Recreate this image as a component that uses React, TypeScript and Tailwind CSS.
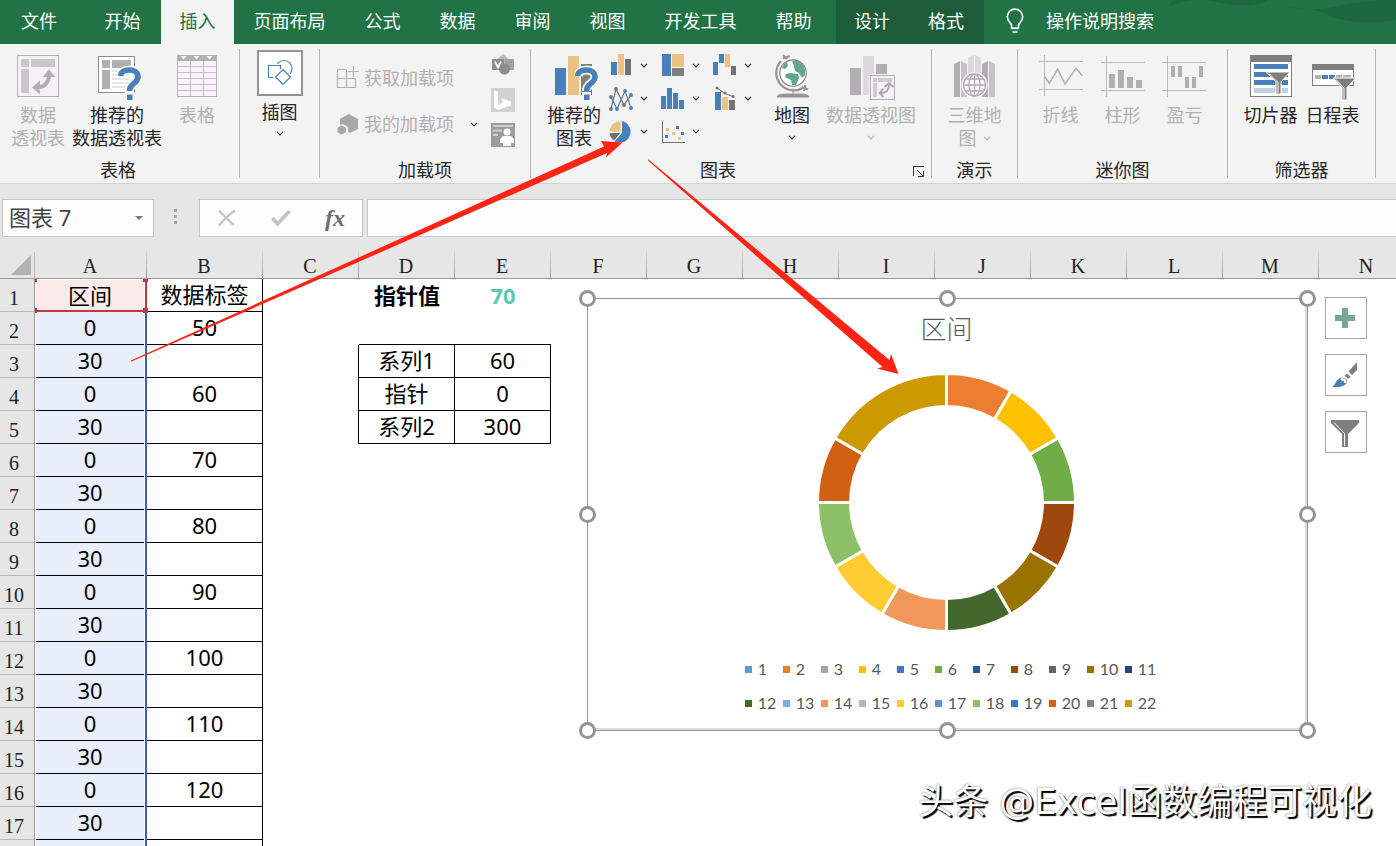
import React from 'react';
import clsx from 'clsx';

const Chevron = ({ className = 'text-[#262626]' }: { className?: string }) => (
  <svg viewBox="0 0 8 5" className={clsx('h-[5px] w-2 shrink-0', className)}>
    <path d="M1 0.8 4 3.8 7 0.8" fill="none" stroke="currentColor" strokeWidth="1.2" />
  </svg>
);

const BigIcon = ({ children }: { children: React.ReactNode }) => (
  <svg viewBox="0 0 48 48" className="h-12 w-12 shrink-0 overflow-visible">
    {children}
  </svg>
);

const SmallIcon = ({ children }: { children: React.ReactNode }) => (
  <svg viewBox="0 0 24 24" className="h-6 w-6 shrink-0 overflow-visible">
    {children}
  </svg>
);

const QuestionMark = () => (
  <g fill="none">
    <path d="M28.5 23C29 17.5 33 17 36.5 17C41 17 45 19 45 24C45 31 36.5 29.5 36.5 38" stroke="#f3f3f3" strokeWidth="9" />
    <rect x="32" y="39" width="9" height="9" fill="#f3f3f3" />
    <path d="M27.5 23C28 17.5 33 17 36.5 17C41 17 45 19 45 24C45 31 36.5 29.5 36.5 38" stroke="#4a80ba" strokeWidth="5.5" />
    <rect x="34" y="41.5" width="5.5" height="5.5" fill="#4a80ba" />
  </g>
);

const PivotIcon = () => (
  <BigIcon>
    <rect x="3.5" y="2.5" width="41" height="41" fill="#f5f1f6" stroke="#b4b2b4" />
    <path d="M7 6h8v8H7zM17 6h24v8H17zM7 16h8v24H7z" fill="#cac7ca" />
    <path d="M22 34c8 1 13-4 13-13" fill="none" stroke="#b1afb1" strokeWidth="4" />
    <path d="M35 16.500 41.500 24h-4l-2.500-2.500-2.500 2.500h-4zM18 34.500 26 27.500v4l-3 3 3 3v4z" fill="#b1afb1" />
  </BigIcon>
);

const RecommendedPivotIcon = () => (
  <BigIcon>
    <rect x="5.500" y="3.500" width="36" height="36" fill="#fff" stroke="#8c8c8c" />
    <path d="M9 7h8v8H9zM19 7h19v8H19zM9 17h8v19H9z" fill="#b1b1b1" />
    <path d="M19 18h17M19 22h17M19 26h17M19 30h17M19 34h14" stroke="#cfcfcf" />
    <QuestionMark />
  </BigIcon>
);

const TableIcon = () => (
  <BigIcon>
    <rect x="4.500" y="2.500" width="39" height="41" fill="#f7f3f8" stroke="#b1b1b1" />
    <path d="M4 2h40v6H4z" fill="#b1b1b1" />
    <path d="M7.500 3h6l-3 3.500zM20.500 3h6l-3 3.500zM33.500 3h6l-3 3.500z" fill="#fff" />
    <path d="M17.500 8v35M30.500 8v35M5 13.500h38M5 19.500h38M5 25.500h38M5 31.500h38M5 37.500h38" stroke="#c4c2c4" />
  </BigIcon>
);

const ShapesIcon = () => (
  <svg viewBox="0 0 46 46" className="h-[46px] w-[46px] shrink-0">
    <rect x="1" y="1" width="44" height="44" fill="#fff" stroke="#949494" strokeWidth="2" />
    <g fill="#fff" stroke="#4a80ba" strokeWidth="1.200">
      <circle cx="27" cy="18.500" r="8" />
      <path d="M11.500 15.500h12v12h-12z" stroke="#fff" strokeWidth="3" />
      <path d="M11.500 15.500h12v12h-12z" />
      <path d="M26 19.500 33.500 27 26 34.500 18.500 27z" stroke="#fff" strokeWidth="4" />
      <path d="M26 19.500 33.500 27 26 34.500 18.500 27z" />
    </g>
  </svg>
);

const RecommendedChartIcon = () => (
  <BigIcon>
    <path d="M5 15h11v27H5z" fill="#4a80ba" />
    <path d="M18 3h11v39H18z" fill="#eac282" />
    <path d="M31 11h11v31H31z" fill="#7f7f7f" />
    <QuestionMark />
  </BigIcon>
);

const GlobeIcon = () => (
  <BigIcon>
    <path d="M15 5.500 22 3M13 8A17.500 17.500 0 0 0 35.500 34.500M34 34l6 2.500M36 38l1.500-6" fill="none" stroke="#969696" strokeWidth="2.200" />
    <path d="m15 2 4 4" stroke="#969696" strokeWidth="2" />
    <circle cx="25" cy="20" r="13.200" fill="#fff" stroke="#858585" strokeWidth="1.200" />
    <path d="M14 15c1-3 3-5 5-6l1 4-3 3zM24 8c7-2 12 3 13 9v5l-3 3-3-5-4-2-1-5zM18 21l4-1 8 1 1 4-3 7h-4l-1-5-6-3z" fill="#62a58d" />
    <path d="M25 35.500v6M9 44c1-3 5-3 16-3s15 0 16 3z" fill="#969696" stroke="#969696" />
  </BigIcon>
);

const PivotChartIcon = () => (
  <BigIcon>
    <path d="M3 15h11v27H3zM29 11h11v15H29z" fill="#b1afb1" />
    <path d="M16 3h11v39H16z" fill="#dcd8dc" />
    <rect x="22" y="21" width="27" height="27" fill="#f3f3f3" />
    <rect x="23.500" y="22.500" width="24" height="24" fill="#f5f1f6" stroke="#b1afb1" />
    <path d="M26 25h4v4h-4zM31 25h14v4H31zM26 30h4v14h-4z" fill="#cfcccf" />
    <path d="M33 40c6 0 9-2 9-8" fill="none" stroke="#a9a7a9" strokeWidth="2" />
    <path d="m37.500 34 4.500-4 4.500 4M36.500 35.500 32.500 40l4 4" fill="none" stroke="#a9a7a9" strokeWidth="1.800" />
  </BigIcon>
);

const Map3DIcon = () => (
  <BigIcon>
    <path d="M3 11l6-3v36H3zM31 11l6-3v36h-6z" fill="#b1afb1" />
    <path d="M10 8l6 3v33h-6zM38 8l6 3v33h-6z" fill="#c6c3c6" />
    <path d="M17 5l6-3v36h-6zM24 2l6 3v36h-6z" fill="#dcd8dc" />
    <circle cx="23.500" cy="32" r="13" fill="#f3f3f3" />
    <g fill="none" stroke="#b1afb1" strokeWidth="1.300">
      <circle cx="23.500" cy="32" r="11" fill="#f7f3f8" />
      <ellipse cx="23.500" cy="32" rx="5.500" ry="11" />
      <path d="M23.500 21v22M12.500 32h22M14.500 26h18M14.500 38h18" />
    </g>
  </BigIcon>
);

const SparkLineIcon = () => (
  <BigIcon>
    <path d="M2 8.500h44M2 36.500h44M7.500 2v41" stroke="#b9b9b9" />
    <path d="m7.500 23.500 4.800 6.800 8.400-14L28 31l11-15.700 6.300 7.700" fill="none" stroke="#b1b1b1" strokeWidth="1.500" />
  </BigIcon>
);

const SparkColumnIcon = () => (
  <BigIcon>
    <path d="M2 9.500h44M2 37.500h44M7.500 3v41" stroke="#b9b9b9" />
    <path d="M10 21h6v14h-6zM19 17h6v18h-6zM28 24h6v11h-6zM37 27h6v8h-6z" fill="#b1afb1" />
  </BigIcon>
);

const WinLossIcon = () => (
  <BigIcon>
    <path d="M1 9.500h44M1 37.500h44M6.500 3v41" stroke="#b9b9b9" />
    <path d="M10 13h4v11h-4zM17 13h4v11h-4zM24 24h4v11h-4zM31 24h4v11h-4zM38 13h4v11h-4z" fill="#b1afb1" />
  </BigIcon>
);

const SlicerIcon = () => (
  <BigIcon>
    <rect x="3.500" y="2.500" width="41" height="41" fill="#fff" stroke="#7f7f7f" />
    <path d="M3 2h42v7H3z" fill="#7f7f7f" />
    <path d="M7 11h34v5H7zM7 19h34v5H7zM7 27h34v5H7z" fill="#4a80ba" />
    <path d="M7 35h34v5H7z" fill="#c0d2ea" />
    <path d="M19 19h24l-9 10v12h-5V29z" fill="#7f7f7f" stroke="#fff" strokeWidth="1" />
    <path d="M22 20.500 31 29.500V40" fill="none" stroke="#fff" />
  </BigIcon>
);

const TimelineIcon = () => (
  <BigIcon>
    <rect x="3.500" y="11.500" width="41" height="21" fill="#fff" stroke="#7f7f7f" />
    <path d="M3 11h42v6H3z" fill="#7f7f7f" />
    <path d="M6 22h6v4H6zM27 22h6v4h-6zM34 22h8v4h-8z" fill="#b1b1b1" />
    <path d="M13 22h6v4h-6zM20 22h6v4h-6z" fill="#4a80ba" />
    <path d="M24 25h23l-9 9.500V47h-5V34.500z" fill="#7f7f7f" stroke="#fff" strokeWidth="1" />
    <path d="M27 26.500 35 35v11" fill="none" stroke="#fff" />
  </BigIcon>
);

const chartKinds = [
  {
    name: '柱形图',
    art: (
      <>
        <path d="M0 8h6v13H0z" fill="#4a80ba" />
        <path d="M7 0h6v21H7z" fill="#eac282" />
        <path d="M14 5h6v16h-6z" fill="#737373" />
      </>
    ),
  },
  {
    name: '层次结构图',
    art: (
      <>
        <path d="M-1 0h9v22h-9z" fill="#4a80ba" />
        <path d="M9 0h12v13H9z" fill="#eac282" />
        <path d="M9 14h12v8H9z" fill="#7f7f7f" />
      </>
    ),
  },
  {
    name: '瀑布图',
    art: (
      <>
        <path d="M5 8.500h3M10 0.500h4M16 12.500h3" stroke="#737373" />
        <path d="M-2 8h5v13h-5zM4 0h5v9H4z" fill="#4a80ba" />
        <path d="M10 0h5v13h-5z" fill="#eac282" />
        <path d="M16 12h5v9h-5z" fill="#737373" />
      </>
    ),
  },
  {
    name: '折线图',
    art: (
      <>
        <path d="m0 22 5-20 8 16 7-10" fill="none" stroke="#737373" strokeWidth="1.200" />
        <path d="m0 10 6 12 8-18 6 17" fill="none" stroke="#4a80ba" strokeWidth="1.200" />
        <g fill="#737373">
          <circle cx="0" cy="22" r="1.900" />
          <circle cx="5" cy="2" r="1.900" />
          <circle cx="13" cy="18" r="1.900" />
          <circle cx="20" cy="8" r="1.900" />
        </g>
        <g fill="#4a80ba">
          <circle cx="0" cy="10" r="1.900" />
          <circle cx="6" cy="22" r="1.900" />
          <circle cx="14" cy="4" r="1.900" />
          <circle cx="20" cy="21" r="1.900" />
        </g>
      </>
    ),
  },
  {
    name: '统计图',
    art: <path d="M-2 9h5v13h-5zM4 1h5v21H4zM10 6h5v16h-5zM16 13h5v9h-5z" fill="#4a80ba" />,
  },
  {
    name: '组合图',
    art: (
      <>
        <path d="M0 5h6v18H0z" fill="#4a80ba" />
        <path d="M7 10h6v13H7z" fill="#eac282" />
        <path d="M14 13h6v10h-6z" fill="#737373" />
        <path d="m2 1 8 5.500 8 3" fill="none" stroke="#737373" />
        <circle cx="2" cy="1" r="1.500" fill="#737373" />
        <circle cx="10" cy="6" r="1.500" fill="#737373" />
        <circle cx="18" cy="9.500" r="1.500" fill="#737373" />
      </>
    ),
  },
  {
    name: '饼图',
    art: (
      <>
        <path d="M11 1A11 11 0 1 1 3.500 21.500L11 13z" fill="#4a80ba" />
        <path d="M9.500 1v10.500H-1.500A11 11 0 0 1 9.500 1z" fill="#eac282" />
        <path d="M-1.500 13H9.500L3 20.500A11 11 0 0 1-1.500 13z" fill="#737373" />
      </>
    ),
  },
  {
    name: '散点图',
    art: (
      <>
        <path d="M-0.500 1v21.500H22" fill="none" stroke="#737373" />
        <path d="M3 8h3v3H3zM9 12h3v3H9zM15 17h3v3h-3z" fill="#eac282" />
        <path d="M13 6h3v3h-3zM18 12h3v3h-3zM2 15h3v3H2z" fill="#4a80ba" />
      </>
    ),
  },
];

const BigButton = ({ icon: Icon, lines, width, disabled, arrow }: any) => (
  <button
    type="button"
    disabled={disabled}
    className={clsx('flex flex-col items-center pt-[9px] leading-[23px]', width, disabled && 'text-[#b1b1b1]')}
  >
    <Icon />
    <span className="mt-[3px] flex flex-col items-center whitespace-nowrap">
      {lines.map((line: string) => (
        <span key={line}>{line}</span>
      ))}
    </span>
    {arrow && <Chevron className={clsx('mt-2', disabled ? 'text-[#b1b1b1]' : 'text-[#262626]')} />}
  </button>
);

const Group = ({ label, className, launcher, children }: any) => (
  <section className={clsx('flex shrink-0 flex-col', className)} aria-label={label}>
    <div className="flex flex-1 justify-center">{children}</div>
    <div className="flex h-[26px] items-center">
      <span className="flex-1 text-center">{label}</span>
      {launcher && (
        <button type="button" aria-label="图表选项" className="w-[26px] pl-2 pt-1">
          <svg viewBox="0 0 12 12" className="h-3 w-3" fill="none" stroke="#333">
            <path d="M0.500 10V0.500H11M4 4l6 6M10.500 5v5.500H5" />
          </svg>
        </button>
      )}
    </div>
  </section>
);

const Divider = () => <div className="my-[5px] w-px shrink-0 bg-[#b5b5b5]" />;

const tabs = [
  { name: '文件', width: 'w-[78px] mr-1.5' },
  { name: '开始', width: 'w-[77px]' },
  { name: '插入', width: 'w-[73px]', active: true },
  { name: '页面布局', width: 'w-[111px]' },
  { name: '公式', width: 'w-[75px]' },
  { name: '数据', width: 'w-[75px]' },
  { name: '审阅', width: 'w-[75px]' },
  { name: '视图', width: 'w-[75px]' },
  { name: '开发工具', width: 'w-[111px]' },
  { name: '帮助', width: 'w-[75px] mr-[5px]' },
  { name: '设计', width: 'w-[72px]', context: true },
  { name: '格式', width: 'w-[76px]', context: true },
];

const TabBar = () => (
  <nav className="relative flex h-11 shrink-0 overflow-hidden bg-[#217346] text-[18px] leading-[42px] text-white">
    {tabs.map((tab) => (
      <button
        key={tab.name}
        type="button"
        className={clsx(
          'shrink-0 whitespace-nowrap pb-0.5 text-center',
          tab.width,
          tab.active && 'bg-[#f3f3f3] text-[#217346]',
          tab.context && 'bg-[#1c5c38]'
        )}
      >
        {tab.name}
      </button>
    ))}
    <button type="button" className="flex shrink-0 gap-[22px] pl-[22px]">
      <svg viewBox="0 0 18 26" className="mt-2 h-[26px] w-[18px]" fill="none" stroke="#fff" strokeWidth="1.600">
        <path d="M5.500 20v-3C4 14 1.300 12.500 1.300 8.800a7.700 7.700 0 0 1 15.400 0C16.700 12.500 14 14 12.500 17v3zM5.500 20.500h7M6.500 24h5" />
      </svg>
      操作说明搜索
    </button>
    <svg viewBox="0 0 230 44" className="absolute right-0 top-0 h-11 w-[230px]" fill="#1e6840">
      <path d="M4 6C20 0 34-2 50 2c18 4 40 6 52-2h20v-6H10z" />
      <path d="M120 6c10 4 30 6 60-2l50-6v22c-30 6-60 0-70-6-12-6-26-4-40-8z" />
    </svg>
  </nav>
);

const GetAddinsIcon = () => (
  <svg viewBox="0 0 24 24" className="h-6 w-6" fill="none" stroke="#b1b1b1" strokeWidth="1.200">
    <path d="M10 3.500H1.500v18h18V13M1.500 12.500h18M10.500 3.500v18M17.500 0v11M12 5.500h11" />
  </svg>
);

const MyAddinsIcon = () => (
  <svg viewBox="0 0 24 24" className="h-6 w-6" fill="#a9a7a9">
    <path d="m12.500 2 9.500 5v10l-8 4-2-1v-5l-5-3-3 1.500V7z" />
    <path d="m5.500 13 5 2.500v5l-5 2.500-4.500-2.500v-5z" stroke="#f3f3f3" strokeWidth="1" />
  </svg>
);

const Ribbon = () => (
  <div className="flex h-[140px] shrink-0 overflow-hidden border-b border-[#d2d2d2] bg-[#f3f3f3] text-[18px] text-[#262626]">
    <Group label="表格" className="mr-[5px] pl-1 pr-0.5">
      <BigButton icon={PivotIcon} lines={['数据', '透视表']} width="w-[68px]" disabled />
      <BigButton icon={RecommendedPivotIcon} lines={['推荐的', '数据透视表']} width="w-[90px]" />
      <BigButton icon={TableIcon} lines={['表格']} width="w-[70px]" disabled />
    </Group>
    <Divider />
    <div className="w-[79px] shrink-0">
      <button type="button" className="flex w-full flex-col items-center gap-[5px] pt-1.5 leading-[23px]">
        <ShapesIcon />
        插图
        <Chevron className="mt-0.5 text-[#262626]" />
      </button>
    </div>
    <Divider />
    <Group label="加载项" className="w-[210px]">
      <div className="flex flex-1 flex-col gap-[18px] pl-4 pt-5 text-[#b1b1b1]">
        <button type="button" disabled className="flex h-7 items-center gap-1">
          <GetAddinsIcon />
          获取加载项
        </button>
        <button type="button" className="flex h-7 items-center gap-1">
          <MyAddinsIcon />
          我的加载项
          <Chevron className="ml-3 text-[#262626]" />
        </button>
      </div>
      <div className="flex w-[39px] flex-col items-start gap-[11px] pt-[9px]">
        <button type="button" aria-label="Visio" disabled>
          <svg viewBox="0 0 24 24" className="h-6 w-6">
            <path d="m12 1 6 5.500-6 6-6-6z" fill="#b9b9b9" />
            <path d="M14 6h9v11h-9z" fill="#a2a0a2" />
            <circle cx="13.500" cy="16" r="5.500" fill="#8f8d8f" />
            <path d="M1 6h12v11H1z" fill="#8f8d8f" />
            <path d="m4 8.500 3 6 3-6" fill="none" stroke="#fff" strokeWidth="1.800" />
          </svg>
        </button>
        <button type="button" aria-label="Bing" disabled>
          <svg viewBox="0 0 24 24" className="h-6 w-6">
            <path d="M0 0h24v24H0z" fill="#d2d0d2" />
            <path d="m3 2 4 2v13l5-3-2-4 10 3.500v4L7 22l-4-2.500z" fill="#fff" />
          </svg>
        </button>
        <button type="button" aria-label="People Graph" disabled>
          <svg viewBox="0 0 24 24" className="h-6 w-6">
            <path d="M0 0h24v24H0z" fill="#9d9b9d" />
            <path d="M2 3h20M2 7.500h9M2 12h5" stroke="#d2d0d2" strokeWidth="2" />
            <circle cx="16" cy="9" r="3.500" fill="#fff" />
            <path d="M9 20v-4l3-3h8l3 3v4h-3v3h-8v-3z" fill="#fff" />
          </svg>
        </button>
      </div>
    </Group>
    <Divider />
    <Group label="图表" className="w-[400px]" launcher>
      <BigButton icon={RecommendedChartIcon} lines={['推荐的', '图表']} width="w-[74px]" />
      <div className="grid shrink-0 grid-cols-[52px_52px_52px] content-start pt-[5px]">
        {chartKinds.map((kind) => (
          <button key={kind.name} type="button" aria-label={kind.name} className="flex h-[33px] items-center gap-[5px]">
            <SmallIcon>{kind.art}</SmallIcon>
            <Chevron />
          </button>
        ))}
      </div>
      <BigButton icon={GlobeIcon} lines={['地图']} width="w-[50px]" arrow />
      <BigButton icon={PivotChartIcon} lines={['数据透视图']} width="w-[108px]" disabled arrow />
    </Group>
    <Divider />
    <Group label="演示" className="w-[85px]">
      <button type="button" disabled className="flex flex-col items-center pt-[9px] leading-[23px] text-[#b1b1b1]">
        <Map3DIcon />
        <span className="mt-[3px]">三维地</span>
        <span className="flex items-center gap-1.5">
          图
          <Chevron className="text-[#b1b1b1]" />
        </span>
      </button>
    </Group>
    <Divider />
    <Group label="迷你图" className="w-[209px]">
      <BigButton icon={SparkLineIcon} lines={['折线']} width="w-[62px]" disabled />
      <BigButton icon={SparkColumnIcon} lines={['柱形']} width="w-[62px]" disabled />
      <BigButton icon={WinLossIcon} lines={['盈亏']} width="w-[62px]" disabled />
    </Group>
    <Divider />
    <Group label="筛选器" className="w-[147px]">
      <BigButton icon={SlicerIcon} lines={['切片器']} width="w-[62px]" />
      <BigButton icon={TimelineIcon} lines={['日程表']} width="w-[62px]" />
    </Group>
    <Divider />
  </div>
);

const FormulaBar = () => (
  <div className="flex h-[68px] shrink-0 items-center pl-0.5">
    <div className="relative h-[38px] w-[152px] shrink-0 border border-[#c6c6c6] bg-[#fdfdfd]">
      <select
        aria-label="名称框"
        className="h-full w-full appearance-none bg-transparent pb-0.5 pl-1.5 text-[22px] leading-[34px] text-[#444]"
        defaultValue="图表 7"
      >
        <option>图表 7</option>
      </select>
      <svg viewBox="0 0 8 4" className="pointer-events-none absolute right-2.5 top-4 h-1 w-2">
        <path d="M0 0h8L4 4z" fill="#777" />
      </svg>
    </div>
    <div className="mr-0.5 flex w-[43px] shrink-0 flex-col items-center gap-[3px] pb-1">
      <i className="h-[3px] w-[3px] bg-[#a6a6a6]" />
      <i className="h-[3px] w-[3px] bg-[#a6a6a6]" />
      <i className="h-[3px] w-[3px] bg-[#a6a6a6]" />
    </div>
    <div className="flex h-[38px] w-[164px] shrink-0 items-center justify-between border border-[#c6c6c6] bg-[#fdfdfd] px-[17px]">
      <button type="button" aria-label="取消">
        <svg viewBox="0 0 20 18" className="h-[18px] w-5" fill="none" stroke="#c2c2c2" strokeWidth="2.200">
          <path d="M2 1.500c5 5 9 10 15 14.500M18 1.500C12 5 7 11 2 16.500" />
        </svg>
      </button>
      <button type="button" aria-label="输入">
        <svg viewBox="0 0 20 18" className="h-[18px] w-5" fill="none" stroke="#c2c2c2" strokeWidth="3.600">
          <path d="m1.500 9 5 6L18.500 2" />
        </svg>
      </button>
      <button
        type="button"
        aria-label="插入函数"
        className="font-['Liberation_Serif',serif] text-[24px] font-bold italic leading-8 text-[#6e6e6e]"
      >
        fx
      </button>
    </div>
    <input
      aria-label="编辑栏"
      className="ml-1 h-[38px] min-w-0 flex-1 border border-r-0 border-[#c6c6c6] bg-[#fdfdfd] px-2 text-[22px]"
    />
  </div>
);

const columns = ['A', 'B', 'C', 'D', 'E', 'F', 'G', 'H', 'I', 'J', 'K', 'L', 'M', 'N'];
const rows = Array.from({ length: 17 }, (_, i) => i + 1);

const side: Record<number, [string, string]> = {
  3: ['系列1', '60'],
  4: ['指针', '0'],
  5: ['系列2', '300'],
};

const Grid = () => (
  <table className="w-[1415px] min-w-full table-fixed border-separate border-spacing-0 text-center text-[22px] leading-[30px] text-black">
    <colgroup>
      <col className="w-[35px]" />
      <col className="w-[112px]" />
      <col className="w-[116px]" />
      {columns.slice(2).map((c) => (
        <col key={c} className="w-24" />
      ))}
    </colgroup>
    <thead>
      <tr className="h-[27px] bg-[#e6e6e6] font-['Liberation_Serif',serif] text-[20px] leading-6">
        <th className="border-b border-r border-[#999] border-r-[#bbb] p-0">
          <svg viewBox="0 0 34 26" className="block h-[26px] w-[34px]">
            <path d="M31 3v20H11z" fill="#b2b2b2" />
          </svg>
        </th>
        {columns.map((c) => (
          <th
            key={c}
            scope="col"
            className="relative border-b border-[#999] p-0 pr-0.5 pt-0.5 font-normal text-[#222] after:absolute after:inset-y-0 after:right-0 after:w-px after:bg-gradient-to-b after:from-[#d8d8d8] after:to-[#999]"
          >
            {c}
          </th>
        ))}
      </tr>
    </thead>
    <tbody>
      {rows.map((r) => (
        <tr key={r} className="h-[33px]">
          <th
            scope="row"
            className="border-b border-r border-[#999] border-b-[#b8b8b8] bg-[#e6e6e6] p-0 pr-1.5 pt-1.5 font-['Liberation_Serif',serif] text-[20px] font-normal leading-[26px] text-[#222]"
          >
            {r}
          </th>
          {r === 1 ? (
            <td className="relative border-b-2 border-r-2 border-[#be3a43] p-0">
              <div className="mx-px h-[30px] bg-[#faeaea]">区间</div>
              <i className="absolute left-0 top-0 h-[3px] w-0.5 bg-[#be3a43]" />
              <i className="absolute -right-[3px] top-0 h-[3px] w-[5px] bg-[#be3a43]" />
              <i className="absolute -bottom-[3px] left-0 h-[5px] w-0.5 bg-[#be3a43]" />
              <i className="absolute -bottom-[3px] -right-[3px] h-[5px] w-[5px] bg-[#be3a43]" />
            </td>
          ) : (
            <td className="border-r-2 border-[#2f63bd] p-0 px-px">
              <div className="h-[33px] border-b border-black bg-[#e8effa]">{r % 2 ? 30 : 0}</div>
            </td>
          )}
          <td className="border-b border-r border-black p-0 pb-0.5">
            {r === 1 ? '数据标签' : r % 2 === 0 ? 40 + r * 5 : ''}
          </td>
          <td className={clsx('p-0', side[r] && 'border-r border-black')} />
          {side[r] ? (
            side[r].map((text, i) => (
              <td key={i} className="border-b border-r border-black p-0 pb-0.5">
                {text}
              </td>
            ))
          ) : (
            <>
              <td className={clsx('p-0 pb-0.5 font-bold', r === 2 && 'border-b border-black')}>{r === 1 && '指针值'}</td>
              <td className={clsx('p-0 pb-0.5 font-bold text-[#5cc8b1]', r === 2 && 'border-b border-black')}>
                {r === 1 && '70'}
              </td>
            </>
          )}
          <td colSpan={9} className="p-0" />
        </tr>
      ))}
      {/* the next row only peeks in at the bottom edge */}
      <tr className="h-[33px]">
        <th className="border-r border-[#999] bg-[#e6e6e6] p-0" />
        <td className="border-r-2 border-[#2f63bd] p-0 px-px">
          <div className="h-[33px] bg-[#e8effa]" />
        </td>
        <td className="border-r border-black p-0" />
        <td colSpan={12} className="p-0" />
      </tr>
    </tbody>
  </table>
);

const series = [
  '#5b9bd5', '#ed7d31', '#a5a5a5', '#ffc000', '#4472c4', '#70ad47', '#255e91', '#9e480e',
  '#636363', '#997300', '#264478', '#43682b', '#7cafdd', '#f1975a', '#b7b7b7', '#ffcd33',
  '#698ed0', '#8cc168', '#327dc2', '#d26012', '#848484', '#cc9a00',
];

// [series index, degrees covered]
const slices: [number, number][] = [
  [1, 30], [3, 30], [5, 30], [7, 30], [9, 30], [11, 30], [13, 30], [15, 30], [17, 30], [19, 30], [21, 60],
];

const point = (radius: number, deg: number) => {
  const a = (deg * Math.PI) / 180;
  return `${129.5 + radius * Math.sin(a)} ${130.5 - radius * Math.cos(a)}`;
};

const Donut = () => {
  let start = 0;
  return (
    <svg viewBox="0 0 260 260" className="h-[260px] w-[260px]" stroke="#fff" strokeWidth="3">
      {slices.map(([index, size]) => {
        const from = start;
        start += size;
        return (
          <path
            key={index}
            fill={series[index]}
            d={`M${point(129, from)}A129 129 0 0 1 ${point(129, start)}L${point(96, start)}A96 96 0 0 0 ${point(96, from)}Z`}
          />
        );
      })}
    </svg>
  );
};

const handles = [
  '-left-[9px] -top-[9px]',
  'left-1/2 -ml-[9px] -top-[9px]',
  '-right-[9px] -top-[9px]',
  '-left-[9px] top-1/2 -mt-[9px]',
  '-right-[9px] top-1/2 -mt-[9px]',
  '-left-[9px] -bottom-[9px]',
  'left-1/2 -ml-[9px] -bottom-[9px]',
  '-right-[9px] -bottom-[9px]',
];

const Chart = () => (
  <div className="absolute left-[587px] top-[46px] h-[433px] w-[721px] border border-[#949494] bg-white">
    <div className="flex h-full flex-col items-center border-b-2 border-r-2 border-[#dcdcdc] pt-3">
      <h2 className="text-[26px] font-light leading-9 text-[#595959]">区间</h2>
      <div className="mt-[25px]">
        <Donut />
      </div>
      <ul className="mt-[25px] grid grid-cols-[repeat(10,38px)_auto] gap-y-2.5 pl-2 font-['Lato',sans-serif] text-[16px] leading-6 text-[#595959]">
        {series.map((color, i) => (
          <li key={color} className="flex items-center gap-1.5">
            <i className="h-[7px] w-[7px] shrink-0" style={{ background: color }} />
            {i + 1}
          </li>
        ))}
      </ul>
    </div>
    {handles.map((pos) => (
      <i key={pos} className={clsx('absolute h-[17px] w-[17px] rounded-full border-[3px] border-[#949494] bg-white', pos)} />
    ))}
  </div>
);

const ChartTools = () => (
  <div className="absolute left-[1325px] top-[45px] flex flex-col gap-[15px]">
    <button type="button" aria-label="图表元素" className="h-[42px] w-[42px] border border-[#a6a6a6] bg-white">
      <svg viewBox="0 0 40 40" className="h-10 w-10">
        <path d="M16 10h6v7h7v6h-7v7h-6v-7H9v-6h7z" fill="#74a997" />
      </svg>
    </button>
    <button type="button" aria-label="图表样式" className="h-[42px] w-[42px] border border-[#a6a6a6] bg-white">
      <svg viewBox="0 0 40 40" className="h-10 w-10">
        <path d="M31 7v8l-5 5-3.500-3.500z" fill="#7f7f7f" />
        <path d="m21 18.500 3.500 3-2 2.500-4-3z" fill="#7f7f7f" />
        <path d="M6 32c4-2 4-9 10-9.500 4 0 7 3 4 6.500-3 3-9 3.500-14 3z" fill="#4a80ba" />
        <path d="M15 25c2-1.500 5 0 4 3" fill="none" stroke="#fff" strokeWidth="2.500" />
      </svg>
    </button>
    <button type="button" aria-label="图表筛选器" className="h-[42px] w-[42px] border border-[#a6a6a6] bg-white">
      <svg viewBox="0 0 40 40" className="h-10 w-10">
        <path d="M5 8h28v3L22 22v13h-6V22L5 11z" fill="#7f7f7f" />
        <path d="m8 10.500 10.500 11V34" fill="none" stroke="#fff" />
      </svg>
    </button>
  </div>
);

const Arrows = () => (
  <svg className="pointer-events-none absolute left-0 top-0 h-[400px] w-[920px]" viewBox="0 0 920 400" fill="#ff2413">
    <path d="M131 360.500 604 146.500 601 141 622.500 142.500 606 157.500 607 153 131 361.800z" />
    <path d="M648.500 159.500 889.500 360 891 354 898.500 374 877 368.500 882.500 367 647.800 160.300z" />
  </svg>
);

const App = () => (
  <div className="relative flex h-screen flex-col overflow-hidden bg-[#e6e6e6] font-['Noto_Sans','Noto_Sans_CJK_SC',sans-serif]">
    <TabBar />
    <Ribbon />
    <FormulaBar />
    <main className="relative min-h-0 flex-1 overflow-hidden bg-white">
      <Grid />
      <Chart />
      <ChartTools />
      <p className="absolute bottom-[18px] right-6 whitespace-nowrap font-['DejaVu_Sans','Noto_Sans_CJK_SC',sans-serif] text-[35px] leading-[52px] text-white [text-shadow:2px_2px_1px_#000,0_0_2px_#555]">
        头条 @Excel函数编程可视化
      </p>
    </main>
    <Arrows />
  </div>
);

export default App;
